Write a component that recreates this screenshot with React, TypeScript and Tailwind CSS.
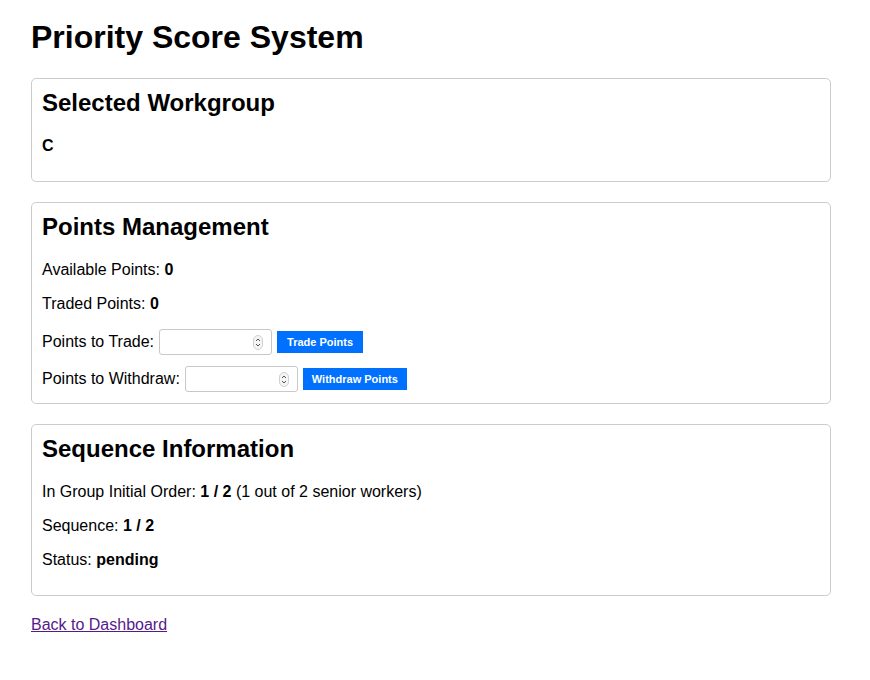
const Spinner = () => (
  <svg width="10" height="15" viewBox="0 0 10 15" className="shrink-0">
    <rect x="0.5" y="0.5" width="9" height="14" rx="4.5" fill="#f4f4f4" stroke="#d0d0d0" />
    <path d="M3 6 L5 4 L7 6" fill="none" stroke="#555" strokeWidth="1" />
    <path d="M3 9 L5 11 L7 9" fill="none" stroke="#555" strokeWidth="1" />
  </svg>
)

const PointsInput = () => (
  <div className="flex items-center w-[113px] h-[26px] border border-[#c8c8c8] rounded-[3px] bg-white pl-1 pr-[8px]">
    <input type="text" className="flex-1 min-w-0 outline-none text-[13px] bg-transparent" />
    <Spinner />
  </div>
)

const Card = ({ title, children }: { title: string; children: React.ReactNode }) => (
  <div className="border border-[#ccc] rounded-[5px] p-[10px] mb-5">
    <h2 className="text-[24px] font-bold leading-[28px] mb-5">{title}</h2>
    {children}
  </div>
)

export default function App() {
  return (
    <div
      className="bg-white text-black min-h-[680px] pl-[31px] pt-[19px]"
      style={{ fontFamily: '"Liberation Sans", Arial, sans-serif' }}
    >
      <div className="w-[800px]">
        <h1 className="text-[32px] font-bold leading-[37px] mb-[22px]">Priority Score System</h1>

        <Card title="Selected Workgroup">
          <p className="text-base leading-[18px] font-bold mb-4">C</p>
        </Card>

        <Card title="Points Management">
          <div className="flex flex-col gap-4 text-base leading-[18px]">
            <p>
              Available Points: <b>0</b>
            </p>
            <p>
              Traded Points: <b>0</b>
            </p>
          </div>
          <div className="flex flex-col gap-[11px] mt-4 pb-px">
            <div className="flex items-center gap-[5px]">
              <span className="text-base">Points to Trade:</span>
              <PointsInput />
              <button className="h-[22px] px-[10px] bg-[#0070ff] text-white text-[11px] font-bold">
                Trade Points
              </button>
            </div>
            <div className="flex items-center gap-[5px]">
              <span className="text-base">Points to Withdraw:</span>
              <PointsInput />
              <button className="h-[22px] px-[9px] bg-[#0070ff] text-white text-[11px] font-bold">
                Withdraw Points
              </button>
            </div>
          </div>
        </Card>

        <Card title="Sequence Information">
          <div className="flex flex-col gap-4 text-base leading-[18px] pb-4">
            <p>
              In Group Initial Order: <b>1 / 2</b> (1 out of 2 senior workers)
            </p>
            <p>
              Sequence: <b>1 / 2</b>
            </p>
            <p>
              Status: <b>pending</b>
            </p>
          </div>
        </Card>

        <a href="#" className="block w-fit text-base leading-[18px] text-[#551a8b] underline">
          Back to Dashboard
        </a>
      </div>
    </div>
  )
}
